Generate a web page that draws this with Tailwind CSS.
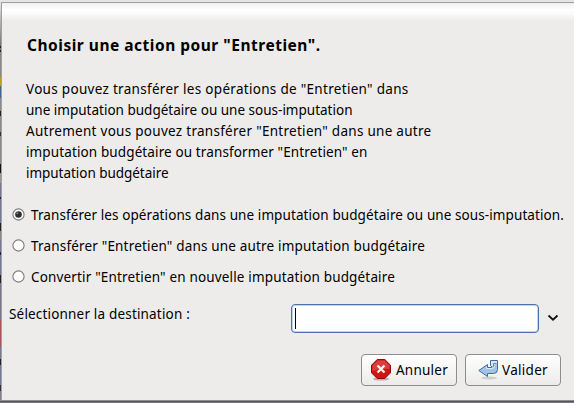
<!DOCTYPE html>
<html lang="fr"><head><meta charset="utf-8"><title>Choisir une action</title>
<script src="https://cdn.jsdelivr.net/npm/@tailwindcss/browser@4"></script></head>
<body class="w-[574px] h-[403px] overflow-hidden bg-[#e6e6e6] font-['Noto_Sans','Open_Sans',sans-serif] text-[13.5px] leading-[21px] text-black">
<div class="flex flex-col h-[403px]">
  <div class="h-[2px] shrink-0 bg-[#e4e4e4]"></div>
  <div class="flex h-[399px] shrink-0">
    <!-- window visible behind the dialog -->
    <div class="flex flex-col w-[1px] shrink-0 bg-[#85848b]">
      <div class="h-[44px] bg-linear-to-b from-[#e4e4e4] to-[#777]"></div>
      <div class="h-[2px] bg-[#222]"></div><div class="h-[2px] bg-[#777]"></div><div class="h-[2px] bg-[#222]"></div>
      <div class="h-[25px] bg-[#888]"></div>
      <div class="h-[9px] bg-[#c49a20]"></div>
      <div class="h-[12px] bg-[#3b6697]"></div>
      <div class="h-[13px] bg-[#8a8a8a]"></div>
      <div class="h-[5px] bg-[#222]"></div>
      <div class="h-[16px] bg-[#8a8a8a]"></div>
      <div class="h-[4px] bg-[#333]"></div>
      <div class="h-[28px] bg-[#8a8a8a]"></div>
      <div class="h-[9px] bg-[#111]"></div>
      <div class="h-[10px] bg-[#999]"></div>
      <div class="h-[14px] bg-[#77779b]"></div>
      <div class="h-[2px] bg-[#222]"></div>
      <div class="h-[24px] bg-[#77779b]"></div>
      <div class="h-[8px] bg-[#222]"></div>
      <div class="h-[9px] bg-[#8a8a8a]"></div>
      <div class="h-[12px] bg-[#77779b]"></div>
      <div class="h-[3px] bg-[#222]"></div>
      <div class="h-[20px] bg-[#77779b]"></div>
      <div class="h-[8px] bg-[#222]"></div>
      <div class="h-[37px] bg-[#77778b]"></div>
      <div class="h-[27px] bg-[#a85557]"></div>
      <div class="h-[12px] bg-[#77779b]"></div>
      <div class="h-[6px] bg-[#222]"></div>
      <div class="h-[20px] bg-[#77779b]"></div>
      <div class="h-[6px] bg-[#333]"></div>
    </div>
    <main class="flex flex-col flex-1 border-t border-l border-b border-[#a0a0a0] border-b-[#8f8f8f] bg-[#edeceb] bg-[linear-gradient(#efefef_0px,#ffffff_7px,#fafafa_11px,#edeceb_18px)]">
      <h1 class="pl-[25px] pt-[32px] h-[76px] text-[15.5px] font-bold tracking-[0.51px] whitespace-nowrap">Choisir une action pour "Entretien".</h1>
      <div class="pl-[24px] h-[126px] whitespace-nowrap">
        <p class="tracking-[0.3px]">Vous pouvez transférer les opérations de "Entretien" dans</p>
        <p class="tracking-[0.004px]">une imputation budgétaire ou une sous-imputation</p>
        <p class="tracking-[0.28px]">Autrement vous pouvez transférer "Entretien" dans une autre</p>
        <p class="tracking-[0.12px]">imputation budgétaire ou transformer "Entretien" en</p>
        <p class="tracking-[-0.038px]">imputation budgétaire</p>
      </div>
      <div class="flex flex-col gap-[10px] pl-[9.5px] h-[91px] whitespace-nowrap">
        <label class="flex h-[21px]"><svg class="w-[13px] h-[13px] mt-[2.5px] mr-[6.5px] shrink-0" viewBox="0 0 13 13"><circle cx="6.5" cy="6.5" r="5.6" fill="#fff" stroke="#7b7a78" stroke-width="1.1"/><circle cx="6.5" cy="6.5" r="3.3" fill="#2b2d2e"/><circle cx="5.3" cy="5.3" r="1" fill="#8a8d8f"/></svg><span class="tracking-[0.09px]">Transférer les opérations dans une imputation budgétaire ou une sous-imputation.</span></label>
        <label class="flex h-[21px]"><svg class="w-[13px] h-[13px] mt-[2.5px] mr-[6.5px] shrink-0" viewBox="0 0 13 13"><circle cx="6.5" cy="6.5" r="5.6" fill="#fff" stroke="#7b7a78" stroke-width="1.1"/></svg><span class="tracking-[0.176px]">Transférer "Entretien" dans une autre imputation budgétaire</span></label>
        <label class="flex h-[21px]"><svg class="w-[13px] h-[13px] mt-[2.5px] mr-[6.5px] shrink-0" viewBox="0 0 13 13"><circle cx="6.5" cy="6.5" r="5.6" fill="#fff" stroke="#7b7a78" stroke-width="1.1"/></svg><span class="tracking-[0.163px]">Convertir "Entretien" en nouvelle imputation budgétaire</span></label>
      </div>
      <div class="flex pl-[7px] pt-[8px] h-[58px]">
        <span class="w-[282px] tracking-[0.18px]">Sélectionner la destination :</span>
        <div class="flex w-[248px] h-[29px] pl-[3px] pt-[3px] rounded-[4px] border border-[#4a71a8] bg-white shadow-[inset_0_0_0_1px_#c3d6ee]"><div class="w-px h-[21px] bg-black"></div></div>
        <svg class="w-[12px] h-[8px] mt-[10px] ml-[8px]" viewBox="0 0 12 8"><path d="M1.5 1.5 L6 5.7 L10.500 1.500" fill="none" stroke="#111" stroke-width="1.8"/></svg>
      </div>
      <div class="flex gap-[8px] pl-[359px]">
        <button class="flex items-center w-[96px] h-[32px] pl-[9px] rounded-[4px] border border-[#8e8d8b] bg-linear-to-b from-white to-[#ecebea]">
          <svg class="w-[20px] h-[22px] mr-[5px] shrink-0" viewBox="0 0 20 22"><ellipse cx="10" cy="20" rx="8" ry="1.6" fill="#777" opacity=".5"/><path d="M6.200 .5H13.800L19.500 6.200V13.800L13.800 19.500H6.200L.5 13.800V6.200Z" fill="#cc1717" stroke="#930808"/><path d="M6.600 1.500H13.400L18.500 6.600V10Q10 9 1.500 12V6.600Z" fill="#e45858" opacity=".6"/><path d="M6.500 6.500L13.500 13.500M13.500 6.500L6.500 13.500" stroke="#f2f2f2" stroke-width="2.300"/></svg>
          <span class="pt-[1px] tracking-[0.24px]">Annuler</span>
        </button>
        <button class="flex items-center w-[96px] h-[32px] pl-[12px] rounded-[4px] border border-[#8e8d8b] bg-linear-to-b from-white to-[#ecebea]">
          <svg class="w-[20px] h-[20px] mb-[1px] mr-[4px] shrink-0" viewBox="0 0 20 20"><ellipse cx="11" cy="18" rx="8" ry="1.500" fill="#999" opacity=".4"/><path d="M12.500 .5H19.500V9.500Q19.500 13.500 15.500 13.500H9.500V16.500L.8 10.500L9.500 4.500V7.500H13.500V5.500H12.500Z" fill="#a3c3e6" stroke="#3c6aa6"/><path d="M13 1H19V4Q16.500 3.500 15.500 6H13Z" fill="#d7e5f4"/><path d="M15.500 7V3.500H18.500" fill="none" stroke="#5f88bb"/><path d="M8.500 6.800V8.500H14Q16.500 8 16.500 6" fill="none" stroke="#dce9f7"/></svg>
          <span class="pt-[1px] tracking-[0.3px]">Valider</span>
        </button>
      </div>
    </main>
  </div>
  <div class="h-[1px] bg-[#55545d]"></div>
  <div class="h-[1px] bg-[#78778d]"></div>
</div>
</body></html>
